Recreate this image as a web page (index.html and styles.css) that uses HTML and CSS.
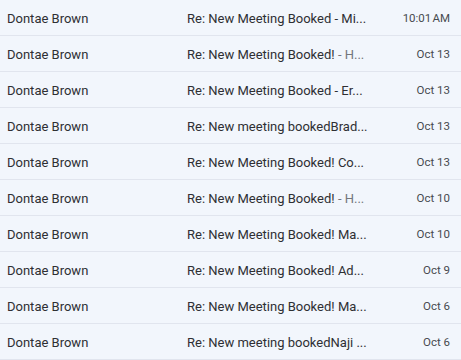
FILE: index.html
```html
<!DOCTYPE html>
<html lang="en">

<head>
  <meta charset="UTF-8">
  <meta name="viewport" content="width=device-width, initial-scale=1.0">
  <title>Inbox</title>
  <link rel="stylesheet" href="styles.css">
</head>

<body>
  <div class="mail-list">
    <div class="mail-row">
      <span class="sender">Dontae Brown</span>
      <span class="subject">Re: New Meeting Booked - Mi...</span>
      <span class="date">10:01&#8202;AM</span>
    </div>
    <div class="mail-row">
      <span class="sender">Dontae Brown</span>
      <span class="subject">Re: New Meeting Booked!<span class="snippet"> - H...</span></span>
      <span class="date">Oct 13</span>
    </div>
    <div class="mail-row">
      <span class="sender">Dontae Brown</span>
      <span class="subject">Re: New Meeting Booked - Er...</span>
      <span class="date">Oct 13</span>
    </div>
    <div class="mail-row">
      <span class="sender">Dontae Brown</span>
      <span class="subject">Re: New meeting bookedBrad...</span>
      <span class="date">Oct 13</span>
    </div>
    <div class="mail-row">
      <span class="sender">Dontae Brown</span>
      <span class="subject">Re: New Meeting Booked! Co...</span>
      <span class="date">Oct 13</span>
    </div>
    <div class="mail-row">
      <span class="sender">Dontae Brown</span>
      <span class="subject">Re: New Meeting Booked!<span class="snippet"> - H...</span></span>
      <span class="date">Oct 10</span>
    </div>
    <div class="mail-row">
      <span class="sender">Dontae Brown</span>
      <span class="subject">Re: New Meeting Booked! Ma...</span>
      <span class="date">Oct 10</span>
    </div>
    <div class="mail-row">
      <span class="sender">Dontae Brown</span>
      <span class="subject">Re: New Meeting Booked! Ad...</span>
      <span class="date">Oct 9</span>
    </div>
    <div class="mail-row">
      <span class="sender">Dontae Brown</span>
      <span class="subject">Re: New Meeting Booked! Ma...</span>
      <span class="date">Oct 6</span>
    </div>
    <div class="mail-row">
      <span class="sender">Dontae Brown</span>
      <span class="subject">Re: New meeting bookedNaji ...</span>
      <span class="date">Oct 6</span>
    </div>
  </div>
</body>

</html>
```

FILE: styles.css
```css
* {
  margin: 0;
  padding: 0;
  box-sizing: border-box;
  font-family: Roboto, 'Noto Sans', sans-serif;
}

body {
  background-color: #f2f6fc;
  color: #2e2f33;
  width: 461px;
  height: 360px;
  overflow: hidden;
}

.mail-row {
  display: flex;
  align-items: center;
  height: 36px;
  padding: 1px 11px 0 7px;
  border-bottom: 1px solid #e1e5ee;
  font-size: 13px;
}

.sender {
  width: 180px;
  flex-shrink: 0;
  white-space: nowrap;
}

.subject {
  flex: 1;
  white-space: nowrap;
}

.snippet {
  color: #74777c;
}

.date {
  font-size: 11.5px;
  color: #474a4f;
  white-space: nowrap;
}
```
